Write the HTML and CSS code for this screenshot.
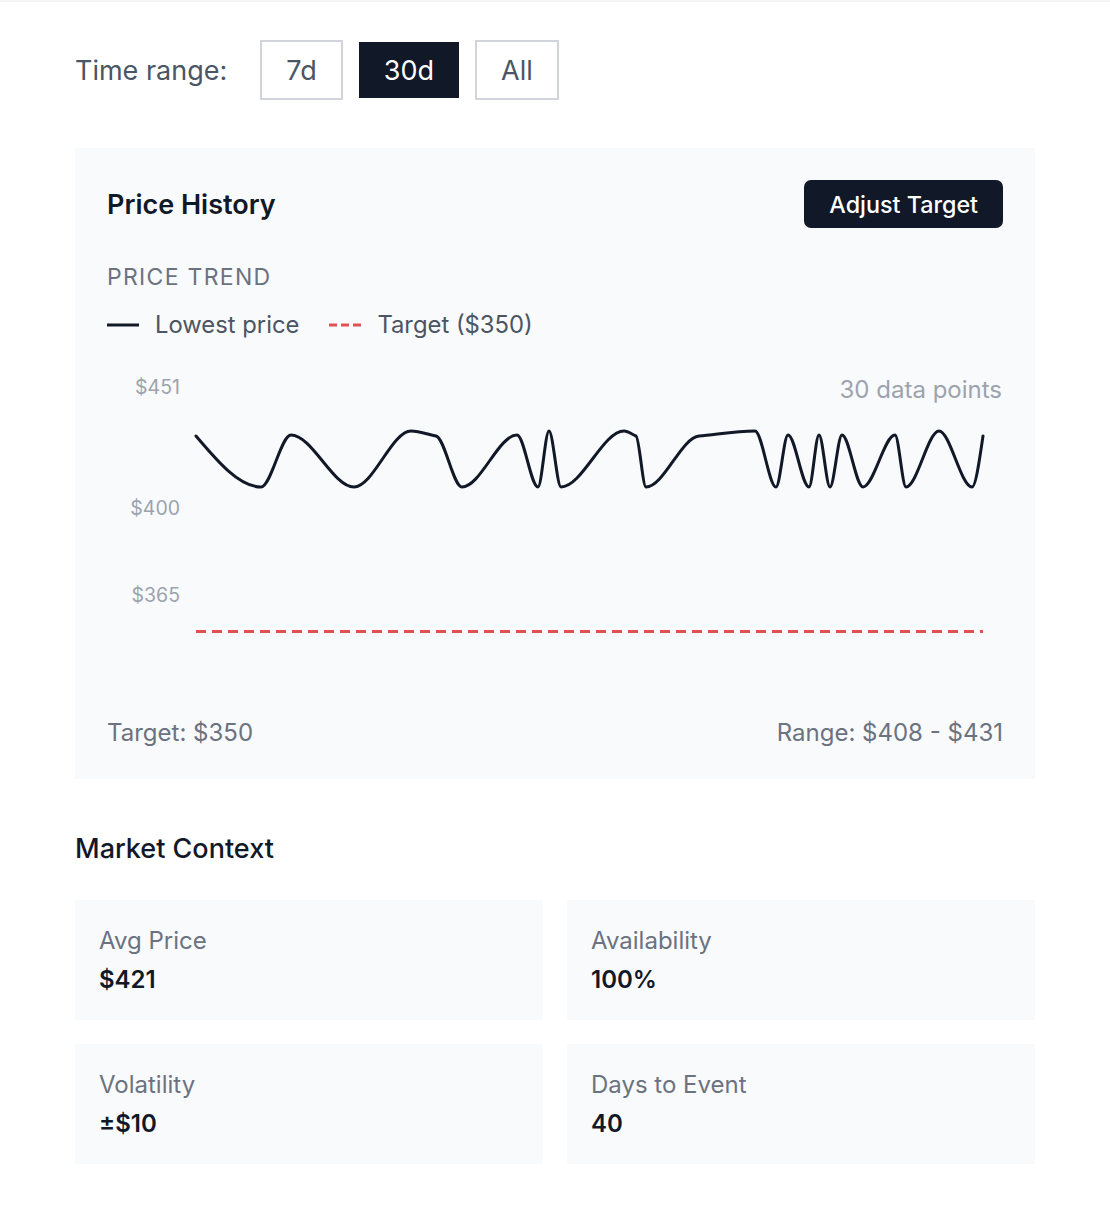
FILE: index.html
```html
<!DOCTYPE html>
<html lang="en">
<head>
<meta charset="utf-8">
<title>Price History</title>
<link rel="stylesheet" href="styles.css">
</head>
<body>
<div class="page">
  <div class="range">
    <span class="range-label">Time range:</span>
    <div class="range-buttons">
      <button class="range-btn">7d</button>
      <button class="range-btn active">30d</button>
      <button class="range-btn">All</button>
    </div>
  </div>

  <section class="card">
    <div class="card-head">
      <h2 class="card-title">Price History</h2>
      <button class="primary-btn">Adjust Target</button>
    </div>
    <div class="trend-label">PRICE TREND</div>
    <div class="legend">
      <div class="legend-item">
        <svg class="legend-swatch" width="32" height="4" viewBox="0 0 32 4"><line x1="0" y1="2" x2="32" y2="2" stroke="#111827" stroke-width="3"/></svg>
        <span>Lowest price</span>
      </div>
      <div class="legend-item">
        <svg class="legend-swatch" width="32" height="4" viewBox="0 0 32 4"><line x1="0" y1="2" x2="32" y2="2" stroke="#e05252" stroke-width="3" stroke-dasharray="8 4"/></svg>
        <span>Target ($350)</span>
      </div>
    </div>
    <svg class="chart" width="895" height="345" viewBox="108 360 895 345">
      <text class="axis" x="181" y="394" text-anchor="end">$451</text>
      <text class="axis" x="181" y="515" text-anchor="end">$400</text>
      <text class="axis" x="181" y="602" text-anchor="end">$365</text>
      <text class="points" x="1003" y="398" text-anchor="end">30 data points</text>
      <path fill="none" stroke="#111827" stroke-width="3" stroke-linecap="round" stroke-linejoin="round"
        d="M197,436 C218.67,461.6 240.33,487 262,487 C272,487 282,435 292,435 C313,435 334,487 355,487 C374,487 393,431 412,431 C420.33,431 428.67,434.33 437,436 C445.67,437.73 454.33,487 463,487 C481.33,487 499.67,435 518,435 C525,435 532,487 539,487 C542.67,487 546.33,431 550,431 C554,431 558,487 562,487 C583,487 604,431 625,431 C629,431 633,434.32 637,436 C640.33,437.4 643.67,487 647,487 C664.67,487 682.33,437.6 700,436 C718.67,434.32 737.33,431 756,431 C763,431 770,487 777,487 C781,487 785,435 789,435 C796,435 803,487 810,487 C813.33,487 816.67,435 820,435 C823.67,435 827.33,487 831,487 C835,487 839,435 843,435 C850,435 857,487 864,487 C874.67,487 885.33,435 896,435 C899.67,435 903.33,487 907,487 C918,487 929,431 940,431 C951,431 962,487 973,487 C976.67,487 980.33,461.3 984,436"/>
      <line x1="197" y1="631.5" x2="984" y2="631.5" stroke="#e05252" stroke-width="3" stroke-dasharray="10 6"/>
    </svg>
    <div class="card-foot">
      <span>Target: $350</span>
      <span>Range: $408 - $431</span>
    </div>
  </section>

  <h2 class="section-title">Market Context</h2>
  <div class="stats">
    <div class="stat">
      <div class="stat-label">Avg Price</div>
      <div class="stat-value">$421</div>
    </div>
    <div class="stat">
      <div class="stat-label">Availability</div>
      <div class="stat-value">100%</div>
    </div>
    <div class="stat">
      <div class="stat-label">Volatility</div>
      <div class="stat-value">±$10</div>
    </div>
    <div class="stat">
      <div class="stat-label">Days to Event</div>
      <div class="stat-value">40</div>
    </div>
  </div>
</div>
</body>
</html>
```

FILE: styles.css
```css
* {
  box-sizing: border-box;
}

html, body {
  margin: 0;
  padding: 0;
  background: #ffffff;
}

body {
  border-top: 2px solid #f3f4f6;
  font-family: Inter, "Noto Sans", "Liberation Sans", sans-serif;
  color: #111827;
}

.page {
  width: 960px;
  margin: 0 auto;
  padding-top: 38px;
  padding-bottom: 40px;
}

.range {
  display: flex;
  align-items: center;
  gap: 33px;
}

.range-label {
  font-size: 27px;
  color: #4b5563;
}

.range-buttons {
  display: flex;
  gap: 14px;
}

.range-btn {
  height: 60px;
  padding: 0 24px;
  font-family: inherit;
  font-size: 27px;
  color: #4b5563;
  background: #ffffff;
  border: 2px solid #d1d5db;
  border-radius: 0;
  cursor: pointer;
}

.range-btn.active {
  padding: 0 25px;
  background: #111827;
  background-clip: padding-box;
  border-color: transparent;
  color: #ffffff;
}

.card {
  margin-top: 48px;
  background: #f9fafb;
  padding: 32px;
}

.card-head {
  display: flex;
  justify-content: space-between;
  align-items: center;
  height: 48px;
}

.card-title {
  margin: 0;
  font-size: 27px;
  font-weight: 600;
  color: #111827;
}

.primary-btn {
  height: 48px;
  padding: 0 25px;
  font-family: inherit;
  font-size: 23.3px;
  font-weight: 500;
  color: #ffffff;
  background: #111827;
  border: none;
  border-radius: 7px;
  cursor: pointer;
}

.trend-label {
  margin-top: 33px;
  font-size: 23px;
  line-height: 32px;
  letter-spacing: 1.3px;
  color: #6b7280;
}

.legend {
  display: flex;
  gap: 30px;
  margin-top: 16px;
  font-size: 23.8px;
  line-height: 32px;
  color: #4b5563;
}

.legend-item {
  display: flex;
  align-items: center;
  gap: 16px;
}

.legend-swatch {
  display: block;
}

.chart {
  display: block;
  margin-top: 19px;
}

.chart .axis {
  font-family: Inter, "Noto Sans", "Liberation Sans", sans-serif;
  font-size: 19.5px;
  fill: #9ca3af;
}

.chart .points {
  font-family: Inter, "Noto Sans", "Liberation Sans", sans-serif;
  font-size: 24px;
  fill: #9ca3af;
}

.card-foot {
  display: flex;
  justify-content: space-between;
  margin-top: 14px;
  font-size: 24px;
  line-height: 28px;
  color: #6b7280;
}

.section-title {
  margin: 50px 0 0;
  font-size: 27px;
  font-weight: 500;
  line-height: 40px;
  color: #111827;
}

.stats {
  display: grid;
  grid-template-columns: 1fr 1fr;
  gap: 24px;
  margin-top: 31px;
}

.stat {
  background: #f9fafb;
  padding: 24px;
  height: 120px;
}

.stat-label {
  font-size: 24px;
  line-height: 34px;
  color: #6b7280;
}

.stat-value {
  margin-top: 5px;
  font-size: 24px;
  line-height: 34px;
  font-weight: 600;
  color: #111827;
}
```
